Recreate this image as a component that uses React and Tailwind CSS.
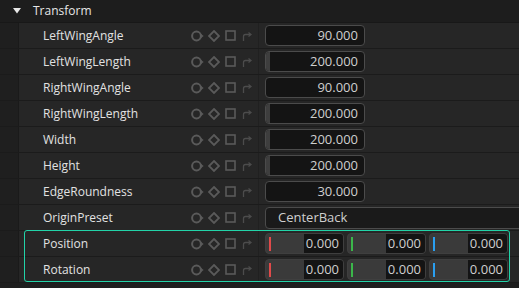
import React from "react";

const rows = [
  { label: "LeftWingAngle", value: "90.000" },
  { label: "LeftWingLength", value: "200.000", bar: true },
  { label: "RightWingAngle", value: "90.000" },
  { label: "RightWingLength", value: "200.000", bar: true },
  { label: "Width", value: "200.000", bar: true },
  { label: "Height", value: "200.000", bar: true },
  { label: "EdgeRoundness", value: "30.000" },
];

const Icons = () => (
  <div className="flex items-center w-[67px] text-[#5a5a5a]">
    <div className="w-[17px] flex items-center">
      <svg width="13" height="12" viewBox="0 0 13 12">
        <circle cx="5.5" cy="6" r="4.4" fill="none" stroke="currentColor" strokeWidth="2" />
        <path d="M9.6 3.6 L12.6 6 L9.6 8.4 Z" fill="currentColor" />
      </svg>
    </div>
    <div className="w-[17px] flex items-center">
      <svg width="12" height="12" viewBox="0 0 12 12">
        <path d="M6 1 L11 6 L6 11 L1 6 Z" fill="none" stroke="currentColor" strokeWidth="1.8" />
      </svg>
    </div>
    <div className="w-[17px] flex items-center">
      <svg width="11" height="11" viewBox="0 0 11 11">
        <rect x="1" y="1" width="9" height="9" fill="none" stroke="currentColor" strokeWidth="1.6" />
      </svg>
    </div>
    <div className="w-[16px] flex items-center">
      <svg width="10" height="10" viewBox="0 0 10 10" className="text-[#4c4c4c]">
        <path d="M1.5 10 V5.5 Q1.5 3.5 3.5 3.5 H8" fill="none" stroke="currentColor" strokeWidth="1.3" />
        <path d="M6.5 1.5 L9 3.5 L6.5 5.5" fill="none" stroke="currentColor" strokeWidth="1.3" />
      </svg>
    </div>
  </div>
);

const Row = ({ label, children }) => (
  <div className="flex h-[26px] border-b border-[#1b1b1b]">
    <div className="w-[19px] bg-[#1f1f1f] border-r border-[#1a1a1a]" />
    <div className="flex flex-1 items-center bg-[#262626]">
      <div className="w-[172px] pl-[24px] text-[12px] text-[#e2e2e2]">{label}</div>
      <Icons />
      <div className="self-stretch w-px bg-[#202020]" />
      <div className="flex flex-1 items-center pl-[6px] pr-[11px]">{children}</div>
    </div>
  </div>
);

const NumberBox = ({ value, bar }) => (
  <div className="relative flex items-center justify-end w-[100px] h-[21px] rounded-[4px] border border-[#4b4b4b] bg-[#141414] pr-[6px] overflow-hidden">
    {bar && <div className="absolute left-0 top-0 bottom-0 w-[4px] bg-[#3e3e3e]" />}
    <span className="text-[13px] text-[#cfcfcf]">{value}</span>
  </div>
);

const VecField = ({ color }) => (
  <div className="flex items-center w-[79px] h-[21px] rounded-[4px] border border-[#3f3f3f] bg-[#3a3a3a] overflow-hidden">
    <div className="flex items-center flex-1 h-full pl-[3px]">
      <div className={`w-[2px] h-[14px] ${color}`} />
    </div>
    <div className="flex items-center justify-end w-[39px] h-full bg-[#141414] pr-[4px] text-[13px] text-[#cfcfcf]">
      0.000
    </div>
  </div>
);

const Vector = () => (
  <div className="flex gap-[3px]">
    <VecField color="bg-[#e04a4a]" />
    <VecField color="bg-[#3bb64a]" />
    <VecField color="bg-[#2a9ff0]" />
  </div>
);

export default function App() {
  return (
    <div
      className="w-[519px] h-[288px] bg-[#1e1e1e] overflow-hidden"
      style={{ fontFamily: '"Open Sans", "Noto Sans", sans-serif' }}
    >
      <div className="flex items-center h-[23px] bg-[#1d1d1d] border-b border-[#181818]">
        <svg width="8" height="6" viewBox="0 0 8 6" className="ml-[13px]">
          <path d="M0 0 H8 L4 5.5 Z" fill="#e8e8e8" />
        </svg>
        <span className="ml-[12px] text-[12px] text-[#e6e6e6]">Transform</span>
      </div>

      {rows.map((r) => (
        <Row key={r.label} label={r.label}>
          <NumberBox value={r.value} bar={r.bar} />
        </Row>
      ))}

      <Row label="OriginPreset">
        <div className="flex items-center h-[22px] -mr-[20px] flex-1 rounded-[4px] border border-[#4b4b4b] bg-[#1a1a1a] pl-[12px] text-[13px] text-[#cfcfcf]">
          CenterBack
        </div>
      </Row>

      <div className="relative">
        <Row label="Position">
          <Vector />
        </Row>
        <Row label="Rotation">
          <Vector />
        </Row>
        <div className="absolute left-[24px] top-[-1px] w-[486px] h-[52px] rounded-[3px] border border-[#22d3a8] pointer-events-none" />
      </div>
    </div>
  );
}
